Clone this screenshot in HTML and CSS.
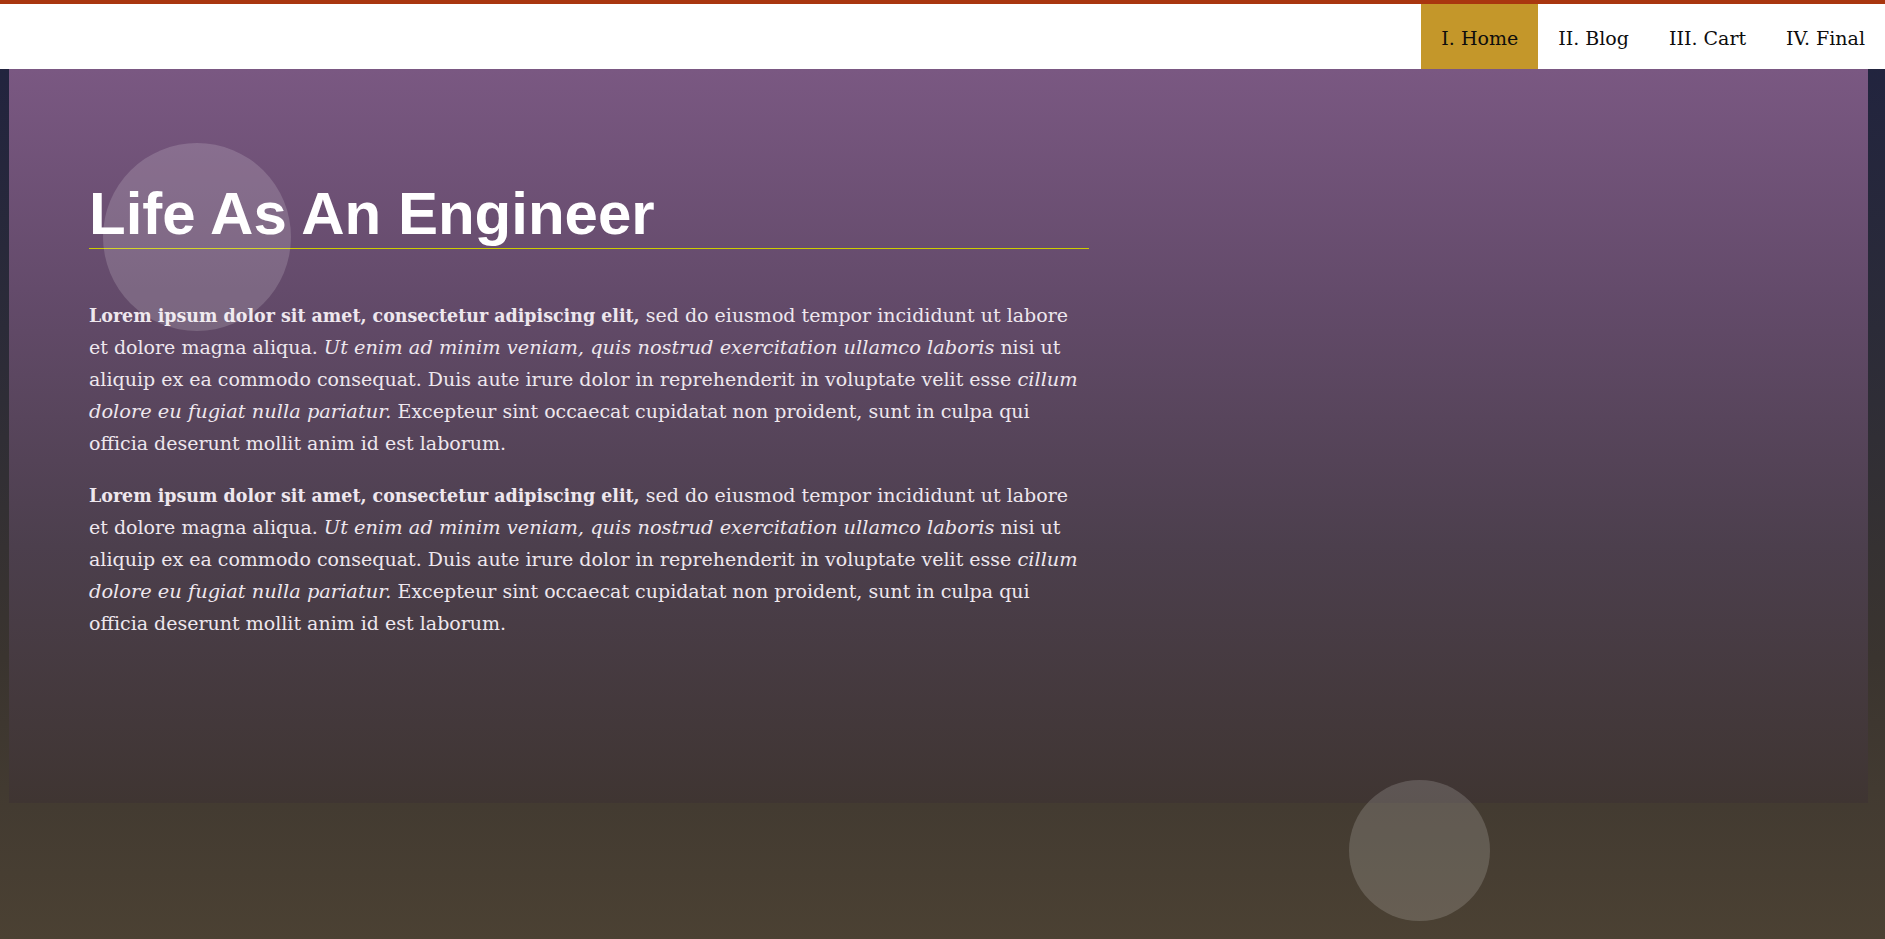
FILE: index.html
```html
<!DOCTYPE html>
<html lang="en">
<head>
<meta charset="utf-8">
<title>Life As An Engineer</title>
<link rel="stylesheet" href="styles.css">
</head>
<body>
<header class="site-header">
  <nav class="nav">
    <a class="nav-item active" href="#">I. Home</a>
    <a class="nav-item" href="#">II. Blog</a>
    <a class="nav-item" href="#">III. Cart</a>
    <a class="nav-item" href="#">IV. Final</a>
  </nav>
</header>
<main class="hero">
  <div class="content">
    <h1 class="title">Life As An Engineer</h1>
    <p class="text"><strong>Lorem ipsum dolor sit amet, consectetur adipiscing elit,</strong> sed do eiusmod tempor incididunt ut labore et dolore magna aliqua. <em>Ut enim ad minim veniam, quis nostrud exercitation ullamco laboris</em> nisi ut aliquip ex ea commodo consequat. Duis aute irure dolor in reprehenderit in voluptate velit esse <em>cillum dolore eu fugiat nulla pariatur.</em> Excepteur sint occaecat cupidatat non proident, sunt in culpa qui officia deserunt mollit anim id est laborum.</p>
    <p class="text"><strong>Lorem ipsum dolor sit amet, consectetur adipiscing elit,</strong> sed do eiusmod tempor incididunt ut labore et dolore magna aliqua. <em>Ut enim ad minim veniam, quis nostrud exercitation ullamco laboris</em> nisi ut aliquip ex ea commodo consequat. Duis aute irure dolor in reprehenderit in voluptate velit esse <em>cillum dolore eu fugiat nulla pariatur.</em> Excepteur sint occaecat cupidatat non proident, sunt in culpa qui officia deserunt mollit anim id est laborum.</p>
  </div>
</main>
<span class="bubble bubble-one"></span>
<span class="bubble bubble-two"></span>
</body>
</html>
```

FILE: styles.css
```css
html {
  min-height: 100%;
  background: linear-gradient(180deg, #1f2240 0%, #2b2b38 35%, #3a342f 70%, #4b4133 100%);
}

body {
  margin: 0;
  min-height: 939px;
  position: relative;
  font-family: "DejaVu Serif", "Liberation Serif", serif;
}

.site-header {
  background: #ffffff;
  border-top: 4px solid #a9360f;
  height: 65px;
  display: flex;
  justify-content: flex-end;
}

.nav {
  display: flex;
  height: 100%;
}

.nav-item {
  display: flex;
  align-items: center;
  padding: 3px 20px 0;
  color: #0d0d0d;
  text-decoration: none;
  font-size: 19px;
}

.nav-item.active {
  background: #c4972a;
}

.hero {
  margin-left: 9px;
  width: 1859px;
  height: 734px;
  box-sizing: border-box;
  padding: 111px 0 0 80px;
  background: linear-gradient(180deg, #7a5882 0%, #644b6b 30%, #4c3f4d 65%, #3f3532 100%);
  position: relative;
  z-index: 1;
}

.content {
  width: 1000px;
}

.title {
  margin: 0;
  font-family: "Liberation Sans", Arial, sans-serif;
  font-weight: 700;
  font-size: 60px;
  line-height: 67px;
  color: #ffffff;
  border-bottom: 1px solid #cccc00;
  padding-bottom: 1px;
}

.text {
  margin: 0 0 20px;
  font-size: 19px;
  line-height: 32px;
  color: #eee7ee;
}

.title + .text {
  margin-top: 50px;
}

.text strong {
  font-size: 19.4px;
  line-height: 1;
  font-weight: 700;
  font-stretch: condensed;
}

.text em {
  font-size: 19.4px;
  line-height: 1;
}

.bubble {
  position: absolute;
  border-radius: 50%;
  background: rgba(255, 255, 255, 0.16);
  z-index: 2;
  pointer-events: none;
}

.bubble-one {
  left: 103px;
  top: 143px;
  width: 188px;
  height: 188px;
}

.bubble-two {
  left: 1349px;
  top: 780px;
  width: 141px;
  height: 141px;
}
```
